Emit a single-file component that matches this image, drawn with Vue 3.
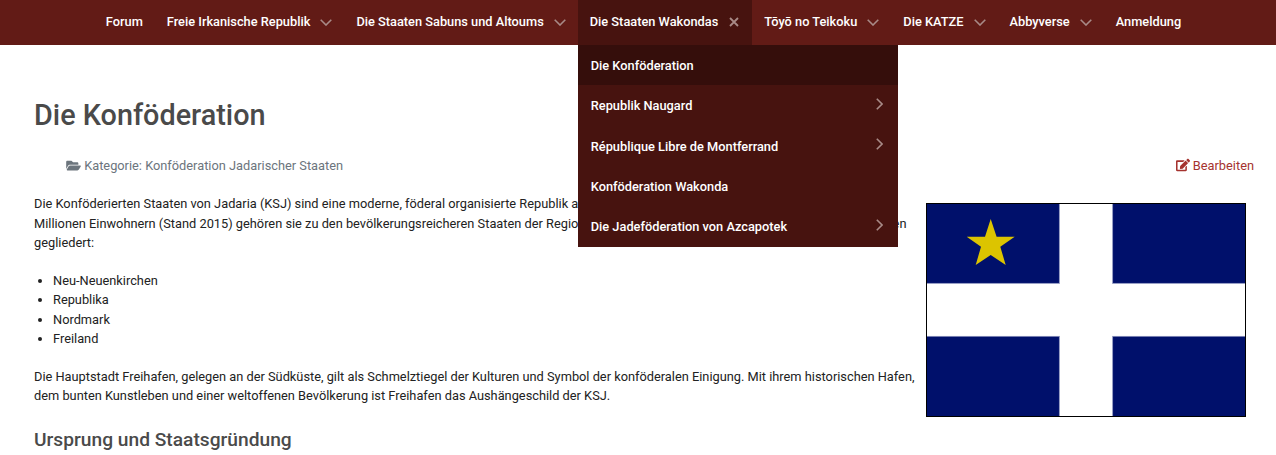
<script setup>
const menu = [
  { label: 'Forum' },
  { label: 'Freie Irkanische Republik', sub: true },
  { label: 'Die Staaten Sabuns und Altoums', sub: true },
  { label: 'Die Staaten Wakondas', sub: true, open: true },
  { label: 'Tōyō no Teikoku', sub: true },
  { label: 'Die KATZE', sub: true },
  { label: 'Abbyverse', sub: true },
  { label: 'Anmeldung' }
]

const dropdown = [
  { label: 'Die Konföderation', active: true },
  { label: 'Republik Naugard', sub: true },
  { label: 'République Libre de Montferrand', sub: true },
  { label: 'Konföderation Wakonda' },
  { label: 'Die Jadeföderation von Azcapotek', sub: true }
]

const states = ['Neu-Neuenkirchen', 'Republika', 'Nordmark', 'Freiland']
</script>

<template>
  <div class="page">
    <nav class="nav">
      <ul class="nav-list">
        <li v-for="item in menu" :key="item.label" class="nav-item" :class="{ open: item.open }">
          <a class="nav-link">{{ item.label }}</a>
          <svg v-if="item.open" class="nav-icon close" viewBox="0 0 12 12">
            <path d="M2 2l8 8M10 2l-8 8" />
          </svg>
          <svg v-else-if="item.sub" class="nav-icon" viewBox="0 0 12 7">
            <path d="M.7.7L6 6l5.3-5.3" />
          </svg>
          <div v-if="item.open" class="dropdown">
            <a v-for="entry in dropdown" :key="entry.label" class="drop-item" :class="{ active: entry.active }">
              <span>{{ entry.label }}</span>
              <svg v-if="entry.sub" class="drop-icon" viewBox="0 0 7 12">
                <path d="M.8.8L6 6 .8 11.2" />
              </svg>
            </a>
          </div>
        </li>
      </ul>
    </nav>

    <main class="content">
      <h1 class="title">Die Konföderation</h1>
      <div class="meta">
        <span class="category">
          <svg class="meta-icon" viewBox="0 0 576 512">
            <path d="M572.694 292.093L500.27 416.248A63.997 63.997 0 0 1 444.989 448H45.025c-18.523 0-30.064-20.093-20.731-36.093l72.424-124.155A64 64 0 0 1 152 256h399.964c18.523 0 30.064 20.093 20.73 36.093zM152 224h328v-48c0-26.51-21.49-48-48-48H272l-64-64H48C21.49 64 0 85.49 0 112v278.046l69.077-118.418C86.214 242.25 117.989 224 152 224z" />
          </svg>
          Kategorie: Konföderation Jadarischer Staaten
        </span>
        <a class="edit">
          <svg class="meta-icon edit-icon" viewBox="0 0 576 512">
            <path d="M402.6 83.2l90.2 90.2c3.8 3.8 3.8 10 0 13.8L274.4 405.6l-92.8 10.3c-12.4 1.4-22.9-9.1-21.5-21.5l10.3-92.8L388.8 83.2c3.8-3.8 10-3.8 13.8 0zm162-22.9l-48.8-48.8c-15.2-15.2-39.9-15.2-55.2 0l-35.4 35.4c-3.8 3.8-3.8 10 0 13.8l90.2 90.2c3.8 3.8 10 3.8 13.8 0l35.4-35.4c15.2-15.3 15.2-40 0-55.2zM384 346.2V448H64V128h229.8c3.2 0 6.2-1.3 8.5-3.5l40-40c7.6-7.6 2.2-20.5-8.5-20.5H48C21.5 64 0 85.5 0 112v352c0 26.5 21.5 48 48 48h352c26.5 0 48-21.5 48-48V306.2c0-10.7-12.9-16-20.5-8.5l-40 40c-2.2 2.3-3.5 5.3-3.5 8.5z" />
          </svg>
          Bearbeiten
        </a>
      </div>

      <div class="article">
        <svg class="flag" viewBox="0 0 320 214">
          <rect width="320" height="214" fill="#00106b" />
          <rect x="133.3" y="-2" width="53.4" height="218" fill="#fff" stroke="#8b92bd" stroke-width="0.7" />
          <rect x="-2" y="80.3" width="324" height="53" fill="#fff" stroke="#8b92bd" stroke-width="0.7" />
          <rect x="134" y="70" width="52" height="74" fill="#fff" />
          <polygon points="64.7,16 70.6,33.7 88.7,33.7 74.3,43.7 79.7,62 64.7,52 49.7,62 55,43.7 40.7,33.7 59,33.7" fill="#dcc400" />
          <rect x="0.5" y="0.5" width="319" height="213" fill="none" stroke="#000" />
        </svg>
        <p>Die Konföderierten Staaten von Jadaria (KSJ) sind eine moderne, föderal organisierte Republik auf dem Kontinent Ostaria. Mit ihren insgesamt 38,5 Millionen Einwohnern (Stand 2015) gehören sie zu den bevölkerungsreicheren Staaten der Region. Das Land ist in insgesamt vier regionale Bundesstaaten gegliedert:</p>
        <ul class="states">
          <li v-for="state in states" :key="state">{{ state }}</li>
        </ul>
        <p>Die Hauptstadt Freihafen, gelegen an der Südküste, gilt als Schmelztiegel der Kulturen und Symbol der konföderalen Einigung. Mit ihrem historischen Hafen, dem bunten Kunstleben und einer weltoffenen Bevölkerung ist Freihafen das Aushängeschild der KSJ.</p>
        <h2 class="subtitle">Ursprung und Staatsgründung</h2>
      </div>
    </main>
  </div>
</template>

<style>
html, body {
  margin: 0;
  background: #fff;
  overflow: hidden;
}
</style>

<style scoped>
.page {
  font-family: Roboto, 'Liberation Sans', sans-serif;
  font-size: 12.8px;
  line-height: 19.5px;
  color: #222;
}

.nav {
  height: 45px;
  background: #621b16;
}

.nav-list {
  display: flex;
  justify-content: center;
  margin: 0;
  padding: 0 0 0 11px;
  list-style: none;
}

.nav-item {
  position: relative;
  display: flex;
  align-items: center;
  gap: 10px;
  box-sizing: border-box;
  height: 45px;
  padding: 0 12px 1px;
  color: #fff;
  font-weight: 500;
}

.nav-item.open {
  background: #47130f;
}

.nav-icon {
  width: 12px;
  height: 7px;
  fill: none;
  stroke: #a88a87;
  stroke-width: 1.6;
}

.nav-icon.close {
  height: 12px;
  stroke-width: 1.8;
}

.dropdown {
  position: absolute;
  top: 45px;
  left: 0;
  z-index: 10;
  width: 320px;
  background: #47130f;
}

.drop-item {
  display: flex;
  align-items: center;
  justify-content: space-between;
  box-sizing: border-box;
  height: 40.4px;
  padding: 0.6px 15px 0 13px;
}

.drop-item.active {
  background: #350e0b;
}

.drop-icon {
  width: 7px;
  height: 12px;
  margin-top: -4px;
  fill: none;
  stroke: #a88a87;
  stroke-width: 1.6;
}

.content {
  padding: 0 22px 0 34px;
}

.title {
  margin: 0;
  padding-top: 50px;
  color: #4a4a4a;
  font-size: 28.8px;
  font-weight: 500;
  line-height: 40px;
}

.meta {
  display: flex;
  justify-content: space-between;
  margin-top: 21px;
  line-height: 20px;
}

.category {
  padding-left: 32px;
  color: #6c757d;
}

.edit {
  color: #a5332f;
}

.meta-icon {
  width: 15px;
  height: 13px;
  fill: currentColor;
  vertical-align: -2px;
}

.edit-icon {
  width: 14px;
  height: 14px;
}

.article {
  margin-top: 18px;
}

.flag {
  float: right;
  width: 320px;
  height: 214px;
  margin: 9px 8px 0 10px;
}

.article p {
  margin: 0;
}

.states {
  margin: 18.5px 0 18px;
  padding-left: 19px;
  line-height: 19.4px;
}

.subtitle {
  margin: 20.5px 0 0;
  color: #4a4a4a;
  font-size: 19.2px;
  font-weight: 500;
  line-height: 28px;
}
</style>
